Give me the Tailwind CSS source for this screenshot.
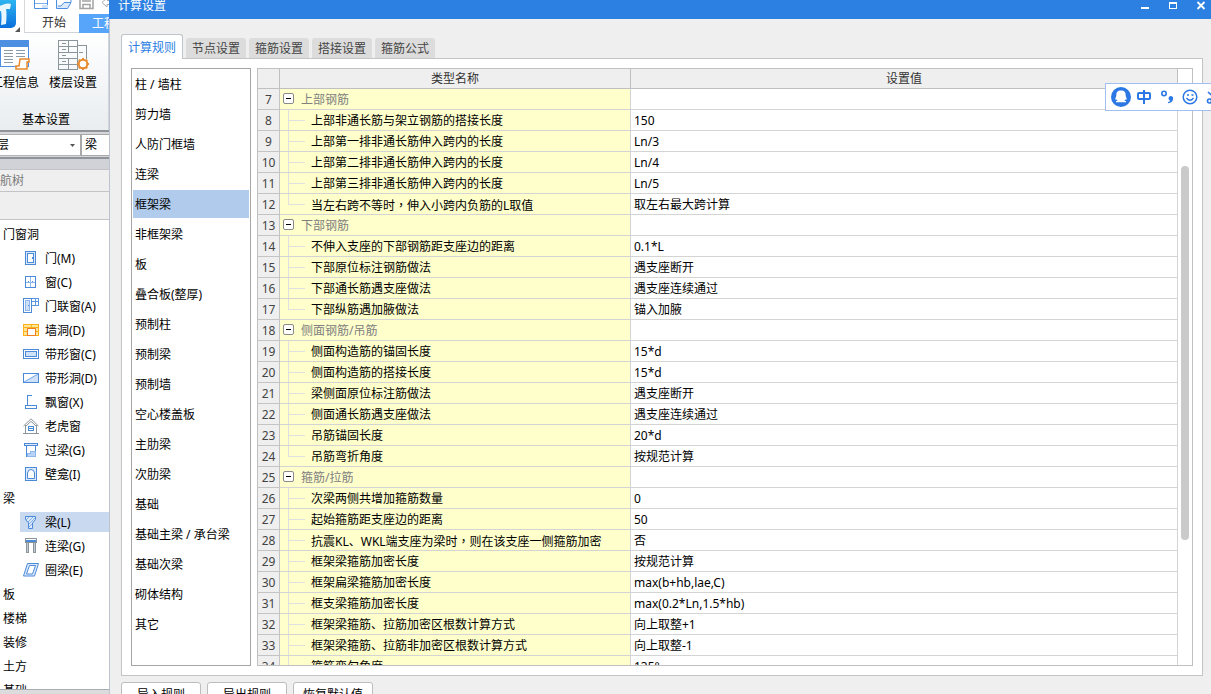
<!DOCTYPE html>
<html lang="zh-CN">
<head>
<meta charset="utf-8">
<title>计算设置</title>
<script src="https://cdn.jsdelivr.net/npm/@tailwindcss/browser@4"></script>
</head>
<body class="flex h-screen overflow-hidden bg-[#efefef] font-['Noto_Sans','Noto_Sans_CJK_SC',sans-serif] text-[12px] leading-[18px] text-black">

<!-- Main application window, behind the dialog -->
<aside class="flex h-full w-[109px] shrink-0 flex-col overflow-hidden bg-white">
  <header class="flex h-[33px] shrink-0 bg-white">
    <svg class="h-[33px] w-[25px] shrink-0" viewBox="0 0 25 33">
      <defs><linearGradient id="lg" x1="0" y1="0" x2="0" y2="1"><stop offset="0" stop-color="#35c3f5"/><stop offset="1" stop-color="#0a6fdc"/></linearGradient></defs>
      <rect x="-14" y="-6" width="30" height="34" rx="5" fill="url(#lg)"/>
      <path d="M-4 7Q2 5 5 4Q8 3 11 4L10 9L6 9Q7 14 6 24L1 25Q2 16 1 11L-4 12Z" fill="#e8f7ff"/>
      <path d="M20 27v5h-5z" fill="#555"/>
      <path d="M24.500 0v33" stroke="#d8d8d8"/>
    </svg>
    <div class="flex min-w-0 flex-1 flex-col">
      <div class="flex h-[14px] shrink-0 gap-[7px] pl-[9px]">
        <svg class="h-[10px] w-[15px] shrink-0" viewBox="0 0 15 10" fill="none" stroke="#4d8fe0"><path d="M.5 0V8.500H13.500V0"/><path d="M1 3.500H13" stroke="#7fb0ea"/><path d="M8 5h6v3H8z" fill="#cfe1f9" stroke="none"/></svg>
        <svg class="h-[10px] w-[16px] shrink-0" viewBox="0 0 16 10" fill="#dcebfb" stroke="#4d8fe0"><path d="M.5 0V8.500H11.500L15 2.500H8L5 6H2M15 2V0"/></svg>
        <svg class="h-[10px] w-[15px] shrink-0" viewBox="0 0 15 10" fill="none" stroke="#a3a3a3"><path d="M1 0V8.500H14V0M4 8V4.500H11V8M3 1H12" stroke-width="1.500"/></svg>
        <svg class="h-[10px] w-[12px] shrink-0" viewBox="0 0 12 10" fill="none" stroke="#a8a8a8"><path d="M6 -2L1 2.500L6 7V4.500H12M6 0.500H12"/></svg>
      </div>
      <nav class="flex h-[19px] shrink-0">
        <button class="w-[54px] shrink-0 border-b border-[#d0d4da] pl-[4px] text-[#333]">开始</button>
        <button class="w-[70px] shrink-0 bg-[#56a5fa] pl-[13px] text-left text-white">工程设置</button>
      </nav>
    </div>
  </header>

  <section class="flex h-[97px] shrink-0 flex-col border-r border-[#d3d6da] bg-linear-to-b from-white to-[#e9edf0]">
    <div class="-ml-[9px] flex gap-[10px] pt-[6px]">
      <button class="flex w-[48px] shrink-0 flex-col items-center gap-[2px]">
        <svg class="h-[33px] w-[48px]" viewBox="0 0 48 33" shape-rendering="crispEdges"><rect x="9.500" y="1.500" width="28" height="26" fill="#fff" stroke="#4d8fe0"/><path d="M9 1h29v7H9z" fill="#4d8fe0"/><path d="M13 11.500h9M25 11.500h9M13 14.500h9M25 14.500h9M13 17.500h9M25 17.500h9M13 20.500h9M13 23.500h9" stroke="#8a9aa6"/><path d="M29 20h9v3h-2v7H25v-3h3z" fill="#fff" stroke="#e8892b" stroke-width="1.500" shape-rendering="auto"/></svg>
        <span>工程信息</span>
      </button>
      <button class="flex w-[48px] shrink-0 flex-col items-center gap-[2px]">
        <svg class="h-[33px] w-[48px]" viewBox="0 0 48 33" fill="none" stroke="#8b959c"><path d="M9.500 1.500h19v29h-19zM9.500 7.500h19M9.500 13.500h19M9.500 19.500h19M9.500 25.500h19M19.500 1.500v12M19.500 19.500v11M13 4.500h4M13 10.500h4M13 16.500h4M13 22.500h4M28.500 6.500h9v13M30 13.500h4" shape-rendering="crispEdges"/><circle cx="34" cy="25" r="4.300" fill="#fff" stroke="#e8892b" stroke-width="2"/><path d="M34 19v1.500M34 29.500v1.500M28 25h1.500M38.500 25H40M29.800 20.800l1 1M37.200 28.200l1 1M29.800 29.200l1-1M37.200 21.800l1-1" stroke="#e8892b" stroke-width="2"/></svg>
        <span>楼层设置</span>
      </button>
    </div>
    <span class="mt-[19px] pl-[22px]">基本设置</span>
  </section>

  <div class="flex h-[29px] shrink-0 border-y-2 border-[#8f949b] bg-[#d4d6da] pt-[2px] pb-px">
    <div class="-ml-[40px] flex w-[120px] shrink-0 items-center border-y border-[#b4b4b4] bg-white">
      <select aria-label="楼层" class="h-full min-w-0 flex-1 appearance-none bg-transparent pl-[25px]"><option>首层</option></select>
      <svg class="mr-[5px] h-[3px] w-[5px]" viewBox="0 0 5 3"><path d="M0 0h5L2.500 3z" fill="#555"/></svg>
    </div>
    <select aria-label="构件类型" class="w-[90px] shrink-0 appearance-none border-y border-l-2 border-[#a8a8a8] bg-white pl-[3px]"><option>梁</option></select>
  </div>
  <div class="h-[11px] shrink-0 border-b border-[#c2c4c8] bg-[#d1d2d7]"></div>
  <h2 class="-ml-[12px] h-[22px] shrink-0 border-b border-[#c2c4c8] bg-[#efefef] leading-[22px] text-[#7b7b7b]">导航树</h2>
  <div class="h-[28px] shrink-0 border-b border-[#c2c4c8] bg-[#efefef]"></div>

  <ul class="min-h-0 flex-1 overflow-hidden pt-[2px] leading-[26px] whitespace-nowrap *:h-6">
    <li class="pl-[3px]">门窗洞</li>
    <li class="flex gap-[6px] pl-[23px]"><svg class="my-[4px] size-4 shrink-0" viewBox="0 0 16 16" shape-rendering="crispEdges"><rect x="2.500" y="1.500" width="10" height="13" fill="#dbe9fb" stroke="#4a8ad8"/><rect x="4.500" y="3.500" width="6" height="9" fill="#fff" stroke="#4a8ad8"/><rect x="9" y="7" width="1" height="2" fill="#4a8ad8"/></svg>门(M)</li>
    <li class="flex gap-[6px] pl-[23px]"><svg class="my-[4px] size-4 shrink-0" viewBox="0 0 16 16" fill="none" stroke="#4a8ad8" shape-rendering="crispEdges"><rect x="2.500" y="2.500" width="10" height="11" fill="#fff"/><path d="M7.500 3v10M3 8.500h9" stroke="#8db8ee"/><path d="M5 7.500h1M9 7.500h1"/></svg>窗(C)</li>
    <li class="flex gap-[6px] pl-[23px]"><svg class="my-[4px] size-4 shrink-0" viewBox="0 0 16 16" fill="none" stroke="#4a8ad8" shape-rendering="crispEdges"><rect x=".5" y=".5" width="8" height="14" fill="#fff"/><rect x="2.500" y="2.500" width="4" height="10" fill="#cfe1f9" stroke="#8db8ee"/><path d="M5 7.500h1"/><path d="M9 .5h6.500v7H9M12.500 1v6M9 3.500h6" stroke="#5b97e0"/></svg>门联窗(A)</li>
    <li class="flex gap-[6px] pl-[23px]"><svg class="my-[4px] size-4 shrink-0" viewBox="0 0 16 16" fill="none" stroke="#fbb117" shape-rendering="crispEdges"><rect x=".5" y="2.500" width="15" height="11" fill="#fde59a"/><path d="M1 5.500h14M1 9.500h3M13 9.500h3M8.500 3v3"/><rect x="4.500" y="6.500" width="8" height="7" fill="#fff" stroke="#ef7d22"/></svg>墙洞(D)</li>
    <li class="flex gap-[6px] pl-[23px]"><svg class="my-[4px] size-4 shrink-0" viewBox="0 0 16 16" fill="none" stroke="#4a8ad8" shape-rendering="crispEdges"><rect x=".5" y="3.500" width="15" height="9" fill="#fff"/><rect x="2.500" y="5.500" width="11" height="5" fill="#cfe1f9"/></svg>带形窗(C)</li>
    <li class="flex gap-[6px] pl-[23px]"><svg class="my-[4px] size-4 shrink-0" viewBox="0 0 16 16" fill="none" stroke="#4a8ad8"><path d="M1 12L15 4v8z" fill="#cfe1f9" stroke="none"/><rect x=".5" y="3.500" width="15" height="9"/><path d="M1 12L15 4" stroke="#6ea6ee"/></svg>带形洞(D)</li>
    <li class="flex gap-[6px] pl-[23px]"><svg class="my-[4px] size-4 shrink-0" viewBox="0 0 16 16" fill="none" stroke="#4a8ad8" shape-rendering="crispEdges"><path d="M9 1.500H4.500V11M2.500 11.500h11v3h-11z"/></svg>飘窗(X)</li>
    <li class="flex gap-[6px] pl-[23px]"><svg class="my-[4px] size-4 shrink-0" viewBox="0 0 16 16" fill="none" stroke="#8b959c"><path d="M.5 8L8 .8L15.500 8M2.500 7v8M13.500 7v8M0 15.500h16M3 8L8 3.300L13 8"/><rect x="5.500" y="8.500" width="5" height="4" stroke="#4a8ad8"/><path d="M6 10.500h4" stroke="#4a8ad8"/></svg>老虎窗</li>
    <li class="flex gap-[6px] pl-[23px]"><svg class="my-[4px] size-4 shrink-0" viewBox="0 0 16 16" fill="none" stroke="#4a8ad8" shape-rendering="crispEdges"><path d="M1.500 1.500h13v2h-13z" fill="#dbe9fb"/><path d="M3.500 4v10.500h9V4"/><path d="M4 14v-3h3V9h5v5z" fill="#b9d4f6" stroke="#8db8ee"/></svg>过梁(G)</li>
    <li class="flex gap-[6px] pl-[23px]"><svg class="my-[4px] size-4 shrink-0" viewBox="0 0 16 16" fill="none" stroke="#4a8ad8"><rect x="2.500" y="1.500" width="11" height="13" fill="#dbe9fb"/><path d="M4.500 12.500V7Q5 3.500 8 3.500T11.500 7v5.500z" fill="#fff"/></svg>壁龛(I)</li>
    <li class="pl-[3px]">梁</li>
    <li class="ml-[20px] flex gap-[6px] border-y-2 border-white bg-[#c9d9f0] pl-[3px] leading-[22px]"><svg class="my-[2px] size-4 shrink-0" viewBox="0 0 16 16" fill="#dbe9fb" stroke="#4a8ad8"><path d="M2.500 2.500h10v3L9.500 9v5.500h-4V9l-3-3.500z"/><path d="M3 6l3-3M5 8l5-5M6 10l6-6M6 13l3-3" stroke="#7eaeea"/></svg>梁(L)</li>
    <li class="flex gap-[6px] pl-[23px]"><svg class="my-[4px] size-4 shrink-0" viewBox="0 0 16 16" fill="#c3c9ce" stroke="#8b959c" shape-rendering="crispEdges"><path d="M3.500 5v9.500h2V5M10.500 5v9.500h2V5"/><path d="M2.500.5h11v4h-11z" fill="#fff"/><path d="M3.500 2.500h9v1h-9z" fill="#6ea6ee" stroke="#4a8ad8"/></svg>连梁(G)</li>
    <li class="flex gap-[6px] pl-[23px]"><svg class="my-[4px] size-4 shrink-0" viewBox="0 0 16 16" fill="#fff" stroke="#4a8ad8"><path d="M4.500 1.500h11l-4 12.500H.5z" fill="#dbe9fb"/><path d="M6.500 3.500h6L9.500 12H3.500z"/></svg>圈梁(E)</li>
    <li class="pl-[3px]">板</li>
    <li class="pl-[3px]">楼梯</li>
    <li class="pl-[3px]">装修</li>
    <li class="pl-[3px]">土方</li>
    <li class="pl-[3px]">基础</li>
  </ul>
  <div class="h-[5px] shrink-0 border-t border-[#a9adb3] bg-[#dcdcdc]"></div>
</aside>

<!-- Calculation settings dialog -->
<main class="relative flex h-full min-w-0 flex-1 flex-col bg-[#efefef]">
  <header class="flex h-[19px] shrink-0 items-start justify-between bg-[#2b80e2] pr-[5px] pl-[9px] text-white">
    <h1 class="leading-[12px]">计算设置</h1>
    <div class="flex gap-[18px] pt-px">
      <button aria-label="最小化"><svg class="size-[10px]" viewBox="0 0 10 10"><path d="M1 6h8v2H1z" fill="#fff"/></svg></button>
      <button aria-label="最大化"><svg class="size-[10px]" viewBox="0 0 10 10"><path d="M1 1h8v7H1zM2 3v4h6V3z" fill="#fff" fill-rule="evenodd"/></svg></button>
      <button aria-label="关闭"><svg class="size-[10px]" viewBox="0 0 10 10"><path d="M1.500 1L8.500 8M8.500 1L1.500 8" stroke="#fff" stroke-width="1.800"/></svg></button>
    </div>
  </header>

  <div class="flex min-h-0 flex-1 flex-col border-l border-[#bcc4d0] pr-[8px] pl-[11px]">
    <nav class="z-10 -mb-px flex h-[40px] shrink-0 items-end gap-[3px]">
      <button class="h-[25px] w-[62px] rounded-t-[3px] border border-b-0 border-[#bfc3cb] bg-white pt-[2px] text-[#2b80e2]">计算规则</button>
      <button class="mb-px h-[20px] w-[60px] rounded-t-[3px] bg-[#dcdcdc] pt-[2px] text-[#444]">节点设置</button>
      <button class="mb-px h-[20px] w-[60px] rounded-t-[3px] bg-[#dcdcdc] pt-[2px] text-[#444]">箍筋设置</button>
      <button class="mb-px h-[20px] w-[60px] rounded-t-[3px] bg-[#dcdcdc] pt-[2px] text-[#444]">搭接设置</button>
      <button class="mb-px h-[20px] w-[60px] rounded-t-[3px] bg-[#dcdcdc] pt-[2px] text-[#444]">箍筋公式</button>
    </nav>

    <section class="flex min-h-0 flex-1 gap-[6px] border border-[#c4c4c4] bg-white p-[9px]">
      <ul class="w-[120px] shrink-0 overflow-hidden border border-[#a6a6a6] p-px leading-[30px] whitespace-nowrap" id="parts"></ul>

      <div class="flex min-w-0 flex-1 overflow-hidden border border-[#c0c0c0]">
        <div class="min-w-0 flex-1 overflow-hidden">
          <table class="w-full table-fixed border-separate border-spacing-0">
            <colgroup><col class="w-[22px]"><col class="w-[351px]"><col></colgroup>
            <thead>
              <tr class="h-[20px] bg-[#efefef] text-[#333]">
                <th class="border-r border-b border-[#c0c0c0] p-0"></th>
                <th class="border-r border-b border-[#c0c0c0] p-0 pt-px font-normal">类型名称</th>
                <th class="border-r border-b border-[#c0c0c0] p-0 pt-px font-normal">设置值</th>
              </tr>
            </thead>
            <tbody id="rows"></tbody>
          </table>
        </div>
        <div class="w-[14px] shrink-0 pt-[97px] pl-[3px]">
          <div class="h-[374px] w-[8px] rounded-full bg-[#cacaca]"></div>
        </div>
      </div>
    </section>

    <footer class="flex h-[18px] shrink-0 gap-[6px] pt-[6px]">
      <button class="h-[25px] w-[80px] rounded-[3px] border border-[#bdbdbd] bg-white">导入规则</button>
      <button class="h-[25px] w-[80px] rounded-[3px] border border-[#bdbdbd] bg-white">导出规则</button>
      <button class="h-[25px] w-[80px] rounded-[3px] border border-[#bdbdbd] bg-white">恢复默认值</button>
    </footer>
  </div>

  <!-- Input method bar floating over the right edge -->
  <div class="absolute top-[83px] right-0 z-20 flex h-[28px] w-[106px] items-center overflow-hidden border border-r-0 border-[#a3bff0] bg-white pl-[5px] text-[#2b78e4]">
    <svg class="h-[20px] w-[20px] shrink-0" viewBox="0 0 20 20"><circle cx="10" cy="10" r="10" fill="#2b78e4"/><path d="M10 3.500C13.500 3.500 14.800 5.500 14.600 8C14.600 9.500 16 11 15.600 12.800L14.300 12.500L13.500 14H15V15.300H5V14H6.500L5.700 12.500L4.400 12.800C4 11 5.400 9.500 5.400 8C5.200 5.500 6.500 3.500 10 3.500Z" fill="#fff"/></svg>
    <svg class="ml-[6px] h-[16px] w-[14px] shrink-0" viewBox="0 0 14 16" fill="none" stroke="#2b78e4" stroke-width="2" role="img" aria-label="中文输入"><rect x="1" y="4" width="12" height="6" rx="1"/><path d="M7 1v14"/></svg>
    <svg class="ml-[10px] h-[16px] w-[13px] shrink-0" viewBox="0 0 13 16"><circle cx="3" cy="4.500" r="2.200" fill="none" stroke="#2b78e4" stroke-width="1.600"/><path d="M9.500 7a2.600 2.600 0 0 1 2.600 2.800C12 12.500 10 14 7 14.300V13c1.400-.3 2-.6 2.200-1.200A2.500 2.500 0 0 1 9.500 7Z" fill="#2b78e4"/></svg>
    <svg class="ml-[8px] size-[16px] shrink-0" viewBox="0 0 16 16" fill="none" stroke="#2b78e4"><circle cx="8" cy="8" r="6.800" stroke-width="1.500"/><path d="M4.500 9Q8 13.500 11.500 9" stroke-width="1.300"/><path d="M5 6h2M9.500 6h2" stroke-width="1.500"/></svg>
    <svg class="ml-[8px] size-[16px] shrink-0" viewBox="0 0 16 16" fill="none" stroke="#2b78e4" stroke-width="1.600"><path d="M2 3L12 12M13 3L5 10"/><circle cx="3.500" cy="12" r="2"/></svg>
  </div>
</main>

<script>
  const parts = ['柱 / 墙柱','剪力墙','人防门框墙','连梁','框架梁','非框架梁','板','叠合板(整厚)','预制柱','预制梁','预制墙','空心楼盖板','主肋梁','次肋梁','基础','基础主梁 / 承台梁','基础次梁','砌体结构','其它'];
  document.getElementById('parts').innerHTML = parts.map(p =>
    p === '框架梁'
      ? `<li class="mb-[2px] h-[28px] bg-[#b1cbec] pl-[2px]">${p}</li>`
      : `<li class="h-[30px] pl-[2px]">${p}</li>`).join('');

  // A row without a value is a group heading
  const rows = [
    ['上部钢筋'],
    ['上部非通长筋与架立钢筋的搭接长度','150'],
    ['上部第一排非通长筋伸入跨内的长度','Ln/3'],
    ['上部第二排非通长筋伸入跨内的长度','Ln/4'],
    ['上部第三排非通长筋伸入跨内的长度','Ln/5'],
    ['当左右跨不等时，伸入小跨内负筋的L取值','取左右最大跨计算'],
    ['下部钢筋'],
    ['不伸入支座的下部钢筋距支座边的距离','0.1*L'],
    ['下部原位标注钢筋做法','遇支座断开'],
    ['下部通长筋遇支座做法','遇支座连续通过'],
    ['下部纵筋遇加腋做法','锚入加腋'],
    ['侧面钢筋/吊筋'],
    ['侧面构造筋的锚固长度','15*d'],
    ['侧面构造筋的搭接长度','15*d'],
    ['梁侧面原位标注筋做法','遇支座断开'],
    ['侧面通长筋遇支座做法','遇支座连续通过'],
    ['吊筋锚固长度','20*d'],
    ['吊筋弯折角度','按规范计算'],
    ['箍筋/拉筋'],
    ['次梁两侧共增加箍筋数量','0'],
    ['起始箍筋距支座边的距离','50'],
    ['抗震KL、WKL端支座为梁时，则在该支座一侧箍筋加密','否'],
    ['框架梁箍筋加密长度','按规范计算'],
    ['框架扁梁箍筋加密长度','max(b+hb,lae,C)'],
    ['框支梁箍筋加密长度','max(0.2*Ln,1.5*hb)'],
    ['框架梁箍筋、拉筋加密区根数计算方式','向上取整+1'],
    ['框架梁箍筋、拉筋非加密区根数计算方式','向上取整-1'],
    ['箍筋弯勾角度','135°'],
  ];
  // Full-width commas sit in the middle of their box
  const label = text => `<span>${text.replace('，', `<span lang="zh-TW" class="font-['Noto_Sans_CJK_TC']">，</span>`)}</span>`;
  document.getElementById('rows').innerHTML = rows.map(([name, value], i) => {
    const group = value === undefined;
    const last = rows[i + 1] && rows[i + 1][1] === undefined;
    const cell = group
      ? `<div class="flex h-[20px] items-start gap-[7px] overflow-hidden pl-[3px] leading-[22px] text-[#808080]"><button aria-label="折叠" class="mt-[4px] flex size-[11px] items-center justify-center rounded-[2px] border border-[#8a8a8a] bg-white"><span class="h-px w-[5px] bg-black"></span></button>${label(name)}</div>`
      : `<div class="flex h-[20px] items-start gap-[6px] overflow-hidden pl-[8px] leading-[22px]"><span class="flex h-full w-[17px] shrink-0 flex-col"><span class="h-[11px] border-b border-l border-[#e0e0e0]"></span>${last ? '' : '<span class="flex-1 border-l border-[#e0e0e0]"></span>'}</span>${label(name)}</div>`;
    return `<tr class="h-[21px] whitespace-nowrap"><td class="border-r border-b border-[#c4c4c4] bg-[#efefef] p-0 pt-[2px] text-center text-[#444]">${i + 7}</td><td class="border-r border-b border-[#d4d4d4] bg-[#ffffcc] p-0">${cell}</td><td class="border-r border-b border-[#d4d4d4] bg-white p-0 pt-[2px] pl-[3px]">${value ?? ''}</td></tr>`;
  }).join('');
</script>
</body>
</html>
